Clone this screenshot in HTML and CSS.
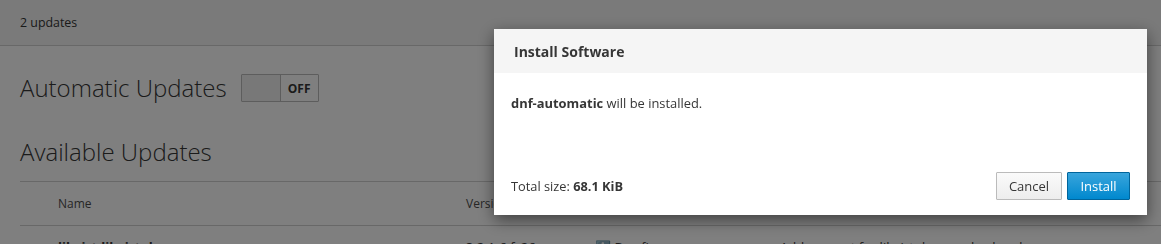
FILE: index.html
```html
<!DOCTYPE html>
<html>
<head>
<meta charset="utf-8">
<link rel="stylesheet" href="styles.css">
</head>
<body>
<div class="page">
  <header class="topbar">2 updates</header>
  <section class="content">
    <div class="auto-row">
      <h2 class="heading">Automatic Updates</h2>
      <div class="switch"><span class="handle"></span><span class="label">OFF</span></div>
    </div>
    <h2 class="heading avail">Available Updates</h2>
    <div class="table">
      <div class="thead">
        <span class="c-name">Name</span>
        <span class="c-ver">Version</span>
        <span class="c-sev">Severity</span>
        <span class="c-desc">Details</span>
      </div>
      <div class="trow">
        <span class="c-name bold">libvirt-libvirt-daemon</span>
        <span class="c-ver">3.2.1-6.fc26</span>
        <span class="c-sev">ℹ️ Bug fix</span>
        <span class="c-desc">Add support for libvirt daemon backend</span>
      </div>
    </div>
  </section>
</div>
<div class="overlay"></div>
<div class="modal">
  <div class="modal-header">Install Software</div>
  <div class="modal-body"><b>dnf-automatic</b> will be installed.</div>
  <div class="modal-footer">
    <span class="total">Total size: <b>68.1 KiB</b></span>
    <div class="buttons">
      <button class="btn btn-default">Cancel</button>
      <button class="btn btn-primary">Install</button>
    </div>
  </div>
</div>
</body>
</html>
```
FILE: styles.css
```css
html, body {
  margin: 0;
  padding: 0;
  background: #fff;
  font-family: "Open Sans", "Liberation Sans", sans-serif;
  color: #363636;
  font-size: 12px;
  overflow: hidden;
}
.page {
  width: 1161px;
  height: 244px;
}
.topbar {
  height: 46px;
  box-sizing: border-box;
  background: #f5f5f5;
  border-bottom: 1px solid #d1d1d1;
  padding: 0 20px;
  display: flex;
  align-items: center;
  font-size: 12.4px;
}
.content {
  padding-left: 20px;
}
.auto-row {
  display: flex;
  align-items: center;
  gap: 14px;
  margin-top: 28px;
}
.heading {
  margin: 0;
  font-weight: 300;
  font-size: 24px;
  line-height: 28px;
}
.switch {
  display: flex;
  width: 78px;
  height: 28px;
  box-sizing: border-box;
  border: 1px solid #bbb;
  border-radius: 1px;
}
.handle {
  width: 38px;
  background: #f1f1f1;
  border-right: 1px solid #bbb;
}
.label {
  flex: 1;
  display: flex;
  align-items: center;
  justify-content: center;
  font-weight: 700;
  font-size: 12px;
  background: #fff;
}
.avail {
  margin-top: 36px;
}
.table {
  margin-top: 15px;
}
.thead, .trow {
  display: grid;
  grid-template-columns: 408px 129px 185px 1fr;
  padding-left: 38px;
  border-top: 1px solid #d1d1d1;
}
.thead {
  height: 43px;
  align-items: center;
  color: #4d4d4d;
  font-size: 12px;
}
.trow {
  padding-top: 12px;
  font-size: 13px;
}
.bold {
  font-weight: 700;
}
.overlay {
  position: fixed;
  inset: 0;
  background: rgba(0, 0, 0, 0.5);
}
.modal {
  position: fixed;
  left: 494px;
  top: 29px;
  width: 653px;
  background: #fff;
  box-shadow: 0 5px 15px rgba(0, 0, 0, 0.5);
  font-size: 13px;
}
.modal-header {
  height: 44px;
  background: #f5f5f5;
  display: flex;
  align-items: center;
  padding: 0 20px;
  font-weight: 700;
  font-size: 14px;
}
.modal-body {
  padding: 21px 17px 0;
  height: 57px;
  font-size: 12.9px;
}
.modal-footer {
  display: flex;
  justify-content: space-between;
  align-items: center;
  padding: 21px 17px 15px;
}
.total {
  font-size: 12.8px;
}
.buttons {
  display: flex;
  gap: 5px;
}
.btn {
  font-family: "Open Sans", "Liberation Sans", sans-serif;
  font-size: 13px;
  height: 28px;
  box-sizing: border-box;
  border-radius: 1px;
  padding: 0;
  cursor: pointer;
}
.btn-default {
  width: 66px;
  background: linear-gradient(#fafafa, #ededed);
  border: 1px solid #bbb;
  color: #363636;
}
.btn-primary {
  width: 63px;
  background: linear-gradient(#39a5dc, #0088ce);
  border: 1px solid #00659c;
  color: #fff;
}
```
